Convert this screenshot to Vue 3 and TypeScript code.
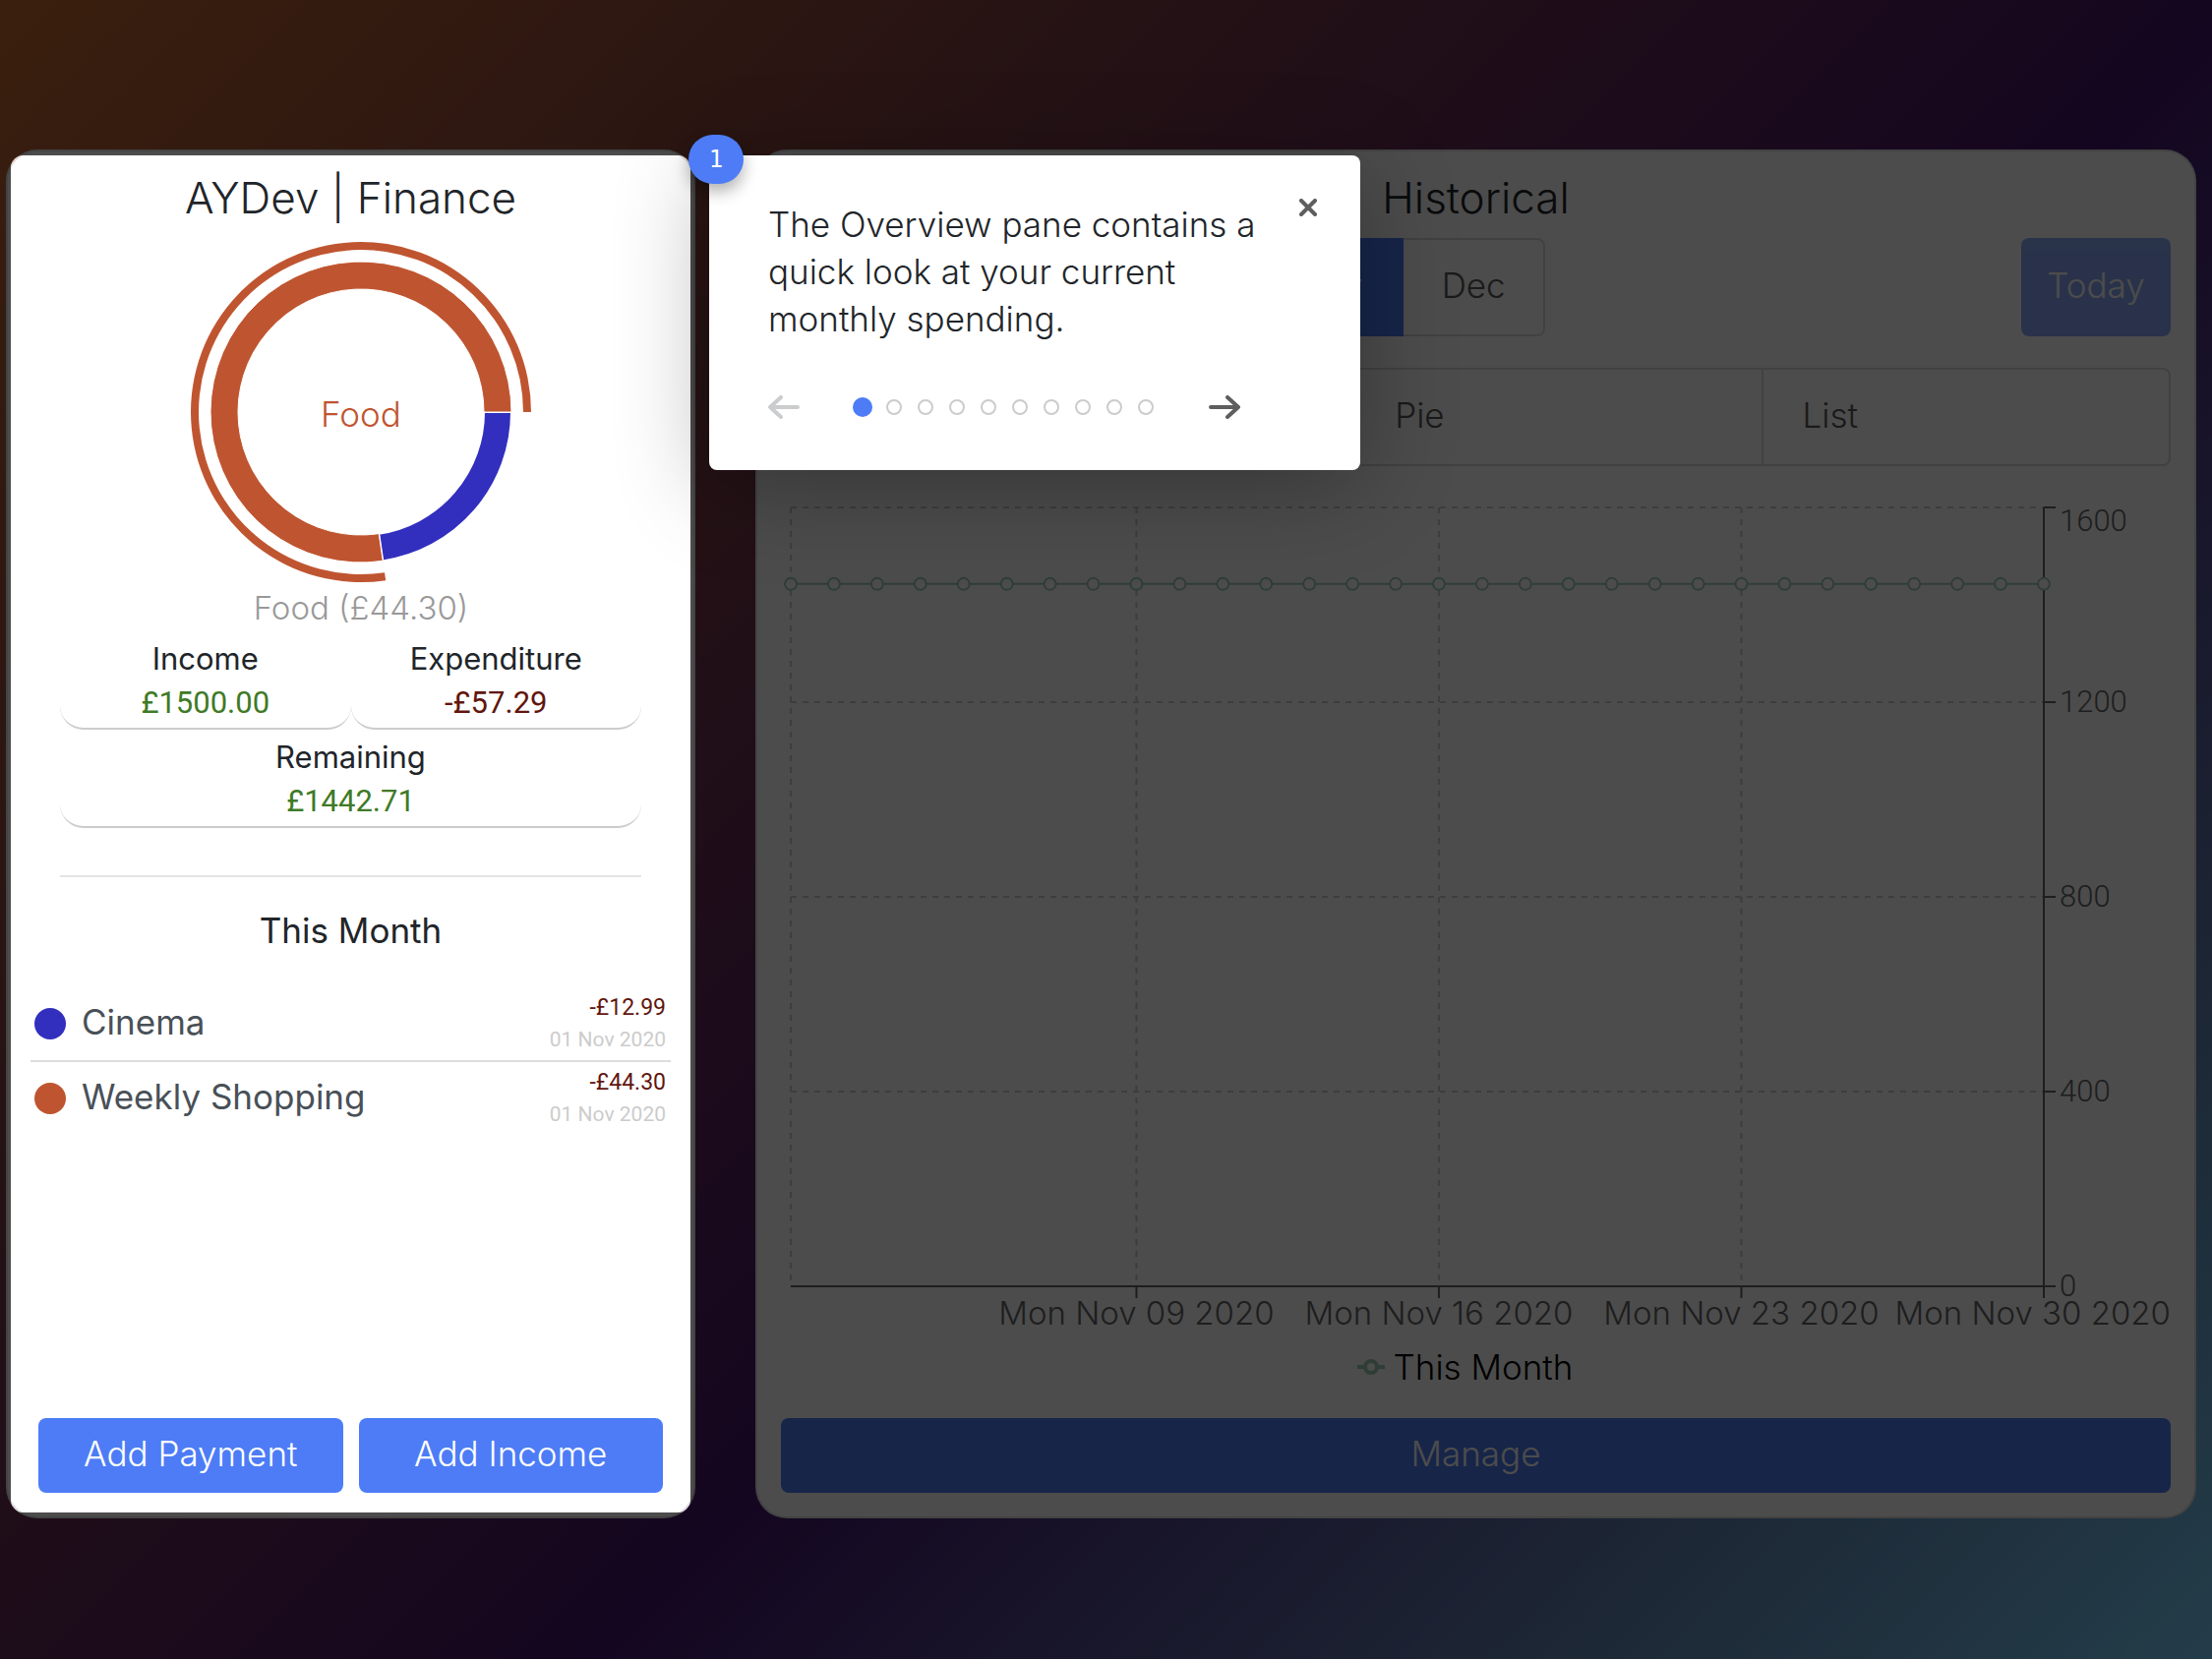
<script setup lang="ts">
import { computed, ref } from 'vue'

interface Payment {
  name: string
  amount: string
  date: string
  color: string
}

const payments: Payment[] = [
  { name: 'Cinema', amount: '-£12.99', date: '01 Nov 2020', color: '#322fbe' },
  { name: 'Weekly Shopping', amount: '-£44.30', date: '01 Nov 2020', color: '#bf5530' },
]

const step = ref(0)
const stepCount = 10

// Donut: the cinema slice sweeps clockwise from three o'clock, food takes the rest.
const split = (12.99 / 57.29) * 360

function ring(inner: number, outer: number, from: number, to: number): string {
  const at = (r: number, deg: number) => {
    const a = (deg * Math.PI) / 180
    return `${(306 + r * Math.cos(a)).toFixed(2)} ${(183 + r * Math.sin(a)).toFixed(2)}`
  }
  const large = to - from > 180 ? 1 : 0
  return (
    `M${at(outer, from)}A${outer} ${outer} 0 ${large} 1 ${at(outer, to)}` +
    `L${at(inner, to)}A${inner} ${inner} 0 ${large} 0 ${at(inner, from)}Z`
  )
}

const cinemaSlice = ring(125, 153, 0, split)
const foodSlice = ring(125, 153, split, 360)
const activeArc = ring(165, 173, split, 360)

// Line chart: thirty days with a flat balance.
const left = 10
const right = 1284
const top = 16
const bottom = 808
const days = 30
const dayX = (i: number) => left + ((right - left) * i) / (days - 1)
const points = computed(() => Array.from({ length: days }, (_, i) => dayX(i)))
const balanceY = bottom - ((bottom - top) * 1442.71) / 1600

const yTicks = [
  { label: '1600', y: top, textY: 40 },
  { label: '1200', y: 214, textY: 224 },
  { label: '800', y: 412, textY: 422 },
  { label: '400', y: 610, textY: 620 },
  { label: '0', y: bottom, textY: 818 },
]
const xTicks = [
  { label: 'Mon Nov 09 2020', x: dayX(8) },
  { label: 'Mon Nov 16 2020', x: dayX(15) },
  { label: 'Mon Nov 23 2020', x: dayX(22) },
  { label: 'Mon Nov 30 2020', x: dayX(29) },
]
const gridX = [left, ...xTicks.map((t) => t.x)]
</script>

<template>
  <main class="page">
    <section class="card overview">
      <h1>AYDev | Finance</h1>
      <svg class="donut" viewBox="0 0 591 406" role="img" aria-label="Spending by category">
        <path :d="cinemaSlice" fill="#322fbe" stroke="#fff" stroke-width="2" />
        <path :d="foodSlice" fill="#bf5530" stroke="#fff" stroke-width="1" />
        <path :d="activeArc" fill="#bf5530" />
        <text x="306" y="198" class="donut-name">Food</text>
        <text x="306" y="394" class="donut-value">Food (£44.30)</text>
      </svg>

      <div class="stats">
        <div class="stat"><span class="stat-label">Income</span><span class="stat-value gain">£1500.00</span></div>
        <div class="stat"><span class="stat-label">Expenditure</span><span class="stat-value loss">-£57.29</span></div>
        <div class="stat wide"><span class="stat-label">Remaining</span><span class="stat-value gain">£1442.71</span></div>
      </div>

      <hr />
      <h2>This Month</h2>

      <ul class="payments">
        <li v-for="p in payments" :key="p.name">
          <span class="dot" :style="{ background: p.color }"></span>
          <span class="name">{{ p.name }}</span>
          <span class="figures">
            <span class="amount">{{ p.amount }}</span>
            <span class="date">{{ p.date }}</span>
          </span>
        </li>
      </ul>

      <div class="actions">
        <button type="button" class="primary">Add Payment</button>
        <button type="button" class="primary">Add Income</button>
      </div>

      <div class="spotlight"></div>

      <aside class="tour" role="dialog" aria-label="Tour">
        <span class="badge">{{ step + 1 }}</span>
        <button type="button" class="close" aria-label="Close">
          <svg width="18" height="18" viewBox="0 0 18 18"><path d="M2 2L16 16M16 2L2 16" /></svg>
        </button>
        <p>The Overview pane contains a quick look at your current monthly spending.</p>
        <nav>
          <button type="button" class="arrow" aria-label="Previous" :disabled="step === 0" @click="step--">
            <svg width="32" height="24" viewBox="0 0 32 24"><path d="M30 12H3M13 2L2 12L13 22" /></svg>
          </button>
          <span class="steps">
            <button
              v-for="n in stepCount"
              :key="n"
              type="button"
              class="step"
              :class="{ current: n - 1 === step }"
              :aria-label="`Step ${n}`"
              @click="step = n - 1"
            ></button>
          </span>
          <button type="button" class="arrow" aria-label="Next" @click="step++">
            <svg width="32" height="24" viewBox="0 0 32 24"><path d="M2 12H29M19 2L30 12L19 22" /></svg>
          </button>
        </nav>
      </aside>
    </section>

    <section class="card history">
      <h1>Historical</h1>
      <div class="toolbar">
        <div class="months">
          <button type="button" class="month selected">Nov</button>
          <button type="button" class="month">Dec</button>
        </div>
        <button type="button" class="today" disabled>Today</button>
      </div>

      <div class="views">
        <span class="view-space"></span>
        <button type="button">Pie</button>
        <button type="button">List</button>
      </div>

      <svg class="chart" viewBox="0 0 1413 860" role="img" aria-label="Balance this month">
        <g class="grid">
          <line v-for="t in yTicks.slice(0, 4)" :key="t.label" :x1="left" :x2="right" :y1="t.y" :y2="t.y" />
          <line v-for="x in gridX" :key="x" :x1="x" :x2="x" :y1="top" :y2="bottom" />
        </g>
        <g class="axis">
          <line :x1="left" :x2="right" :y1="bottom" :y2="bottom" />
          <line :x1="right" :x2="right" :y1="top" :y2="bottom" />
          <line v-for="t in yTicks" :key="t.label" :x1="right" :x2="right + 12" :y1="t.y" :y2="t.y" />
          <line v-for="t in xTicks" :key="t.label" :x1="t.x" :x2="t.x" :y1="bottom" :y2="bottom + 12" />
        </g>
        <g class="series">
          <line :x1="left" :x2="right" :y1="balanceY" :y2="balanceY" />
          <circle v-for="x in points" :key="x" :cx="x" :cy="balanceY" r="6" />
        </g>
        <g class="labels">
          <text v-for="t in yTicks" :key="t.label" class="y-label" :x="right + 16" :y="t.textY">{{ t.label }}</text>
          <text
            v-for="(t, i) in xTicks"
            :key="t.label"
            :x="i === 3 ? 1413 : t.x"
            y="847"
            :text-anchor="i === 3 ? 'end' : 'middle'"
          >{{ t.label }}</text>
        </g>
      </svg>

      <div class="legend">
        <svg width="28" height="28" viewBox="0 0 28 28"><path d="M0 14H9M19 14H28" /><circle cx="14" cy="14" r="6" /></svg>
        <span>This Month</span>
      </div>

      <button type="button" class="primary manage">Manage</button>
    </section>
  </main>
</template>

<style>
body {
  margin: 0;
}
</style>

<style scoped>
* {
  box-sizing: border-box;
}
.page {
  display: grid;
  grid-template-columns: minmax(0, 701fr) minmax(0, 1465fr);
  gap: 61px;
  min-height: 100vh;
  padding: 152px 16px 143px 6px;
  overflow: hidden;
  background: linear-gradient(135deg, #c4692f 0%, #7f3f43 28%, #45156d 58%, #648cb8 85%, #78cbf7 100%);
  font-family: Inter, Roboto, sans-serif;
  font-size: 35px;
  font-weight: 300;
  color: #212529;
}
.card {
  display: flex;
  flex-direction: column;
  position: relative;
  border: 2px solid rgba(0, 0, 0, 0.125);
  border-radius: 32px;
  background: #fff;
}
.overview {
  z-index: 1;
  padding: 22px 31px 24px;
}
.history {
  padding: 22px 24px 24px;
}
h1 {
  margin: 0;
  font-size: 44px;
  line-height: 50px;
  font-weight: 300;
  text-align: center;
}
button {
  padding: 0 0 4px;
  border: 0;
  background: none;
  color: inherit;
  font: inherit;
}

.donut {
  display: block;
  margin: 10px 22px 0;
}
.donut text {
  text-anchor: middle;
}
.donut-name {
  fill: #bf5530;
}
.donut-value {
  fill: #999;
  font-size: 33px;
}

.stats {
  display: grid;
  grid-template-columns: 1fr 1fr;
  margin: 0 22px;
}
.stat {
  display: flex;
  flex-direction: column;
  height: 100px;
  padding-top: 5px;
  border-bottom: 2px solid #ccc;
  border-radius: 24px;
  text-align: center;
  line-height: 45px;
}
.wide {
  grid-column: 1 / 3;
}
.stat-label {
  font-size: 31px;
  font-weight: 400;
}
.stat-value {
  font-family: Roboto, sans-serif;
  font-size: 31px;
  font-weight: 400;
}
.gain {
  color: #3f7a26;
}
.loss {
  color: #61160e;
}
hr {
  width: auto;
  height: 2px;
  margin: 48px 22px 34px;
  border: 0;
  background: #e3e3e3;
}
h2 {
  margin: 0;
  font-size: 35px;
  line-height: 40px;
  font-weight: 400;
  text-align: center;
}

.payments {
  margin: 38px -8px 0;
  padding: 0;
  list-style: none;
}
.payments li {
  display: flex;
  align-items: center;
  height: 76px;
  padding: 0 5px 0 4px;
  border-bottom: 2px solid #ddd;
}
.payments li:last-child {
  border-color: transparent;
}
.dot {
  width: 32px;
  height: 32px;
  margin-right: 16px;
  border-radius: 50%;
}
.name {
  flex: 1;
  padding-bottom: 4px;
  color: #495057;
  font-weight: 400;
}
.figures {
  display: flex;
  flex-direction: column;
  font-family: Roboto, sans-serif;
  font-weight: 400;
  line-height: 32px;
  text-align: right;
}
.amount {
  font-size: 23px;
  color: #61160e;
}
.date {
  font-size: 21px;
  color: #ccc;
}

.actions {
  display: flex;
  gap: 16px;
  margin-top: auto;
}
.primary {
  flex: 1;
  height: 76px;
  border-radius: 8px;
  background: #4d7cf6;
  color: #fff;
}
.manage {
  flex: none;
  margin-top: auto;
}

/* Dims everything except the card that the tour step describes. */
.spotlight {
  position: absolute;
  inset: 4px 3px;
  border-radius: 12px;
  box-shadow: 0 0 0 4000px rgba(0, 0, 0, 0.7);
  pointer-events: none;
}
.tour {
  position: absolute;
  top: 4px;
  left: calc(100% + 16px);
  width: 662px;
  padding: 46px 60px 52px;
  border-radius: 8px;
  background: #fff;
  box-shadow: 0 16px 96px rgba(0, 0, 0, 0.3);
}
.tour p {
  margin: 0;
  padding-right: 20px;
  line-height: 48px;
}
.badge {
  position: absolute;
  top: -21px;
  left: -21px;
  width: 56px;
  border-radius: 25px;
  background: #4d7cf6;
  box-shadow: 0 8px 16px rgba(0, 0, 0, 0.3);
  color: #fff;
  font: 24px/50px "DejaVu Sans Mono", monospace;
  text-align: center;
}
.close {
  position: absolute;
  top: 44px;
  right: 44px;
  display: flex;
}
.close path,
.arrow path {
  fill: none;
  stroke: #5e5e5e;
  stroke-width: 4;
  stroke-linecap: round;
  stroke-linejoin: round;
}
.tour nav {
  display: flex;
  align-items: center;
  margin-top: 54px;
}
.arrow {
  display: flex;
  padding: 0;
}
.arrow:disabled path {
  stroke: #caccce;
}
.steps {
  display: flex;
  flex: none;
  justify-content: center;
  align-items: center;
  gap: 16px;
  width: 320px;
  margin: 0 48px;
}
.step {
  width: 16px;
  height: 16px;
  padding: 0;
  border: 2px solid #caccce;
  border-radius: 50%;
}
.step.current {
  width: 20px;
  height: 20px;
  margin: 0 -2px;
  border: 0;
  background: #4d7cf6;
}

.toolbar {
  display: flex;
  justify-content: space-between;
  height: 100px;
  margin-top: 16px;
}
.months {
  display: flex;
  width: 55%;
}
.month {
  width: 144px;
  border: 2px solid #d9d9d9;
  border-left: 0;
  border-radius: 0 8px 8px 0;
  color: #595959;
}
.selected {
  flex: 1;
  padding-right: 42px;
  border: 0;
  border-radius: 8px 0 0 8px;
  background: #4d7cf6;
  color: #fff;
  text-align: right;
}
.today {
  width: 152px;
  border-radius: 8px;
  background: #4d7cf6;
  color: #fff;
  opacity: 0.65;
}
.views {
  display: grid;
  grid-template-columns: 7fr 5fr 5fr;
  height: 100px;
  margin-top: 32px;
  border: 2px solid #d9d9d9;
  border-radius: 8px;
}
.views button {
  padding-left: 40px;
  border-left: 2px solid #d9d9d9;
  color: #595959;
  text-align: left;
}

.chart {
  display: block;
  margin-top: 26px;
}
.grid line {
  stroke: #ccc;
  stroke-width: 2;
  stroke-dasharray: 6 6;
}
.axis line {
  stroke: #666;
  stroke-width: 2;
}
.series line,
.series circle {
  fill: #fff;
  stroke: #9fcdb8;
  stroke-width: 2;
}
.labels text {
  fill: #666;
  font-size: 33px;
}
.labels .y-label {
  font-family: Roboto, sans-serif;
  font-size: 31px;
}
.legend {
  display: flex;
  justify-content: center;
  align-items: center;
  gap: 9px;
  margin: 8px 22px 0 0;
  line-height: 44px;
  color: #000;
}
.legend path,
.legend circle {
  fill: none;
  stroke: #9fcdb8;
  stroke-width: 4;
}
</style>
